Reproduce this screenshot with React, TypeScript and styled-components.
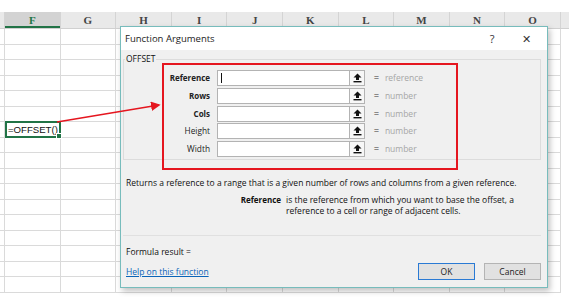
import React from 'react';
import styled, { createGlobalStyle } from 'styled-components';

const GlobalStyle = createGlobalStyle`
    html, body {
        margin: 0;
        padding: 0;
        background: #ffffff;
        overflow: hidden;
    }
`;

const COLS = ['F', 'G', 'H', 'I', 'J', 'K', 'L', 'M', 'N', 'O'];
const ROW_COUNT = 17;

const Screen = styled.div`
    position: relative;
    width: 569px;
    height: 297px;
    overflow: hidden;
    font-family: 'Open Sans', 'Noto Sans', sans-serif;
`;

const Sheet = styled.div`
    padding-top: 12px;
`;

const HeaderRow = styled.div`
    display: grid;
    grid-template-columns: 5px repeat(10, 55.6px);
    height: 16px;
    background: #e9e9e9;
    border-bottom: 1px solid #d0d0d0;
`;

const ColHead = styled.div<{ $active?: boolean }>`
    display: flex;
    align-items: center;
    justify-content: center;
    border-right: 1px solid #d4d4d4;
    font-family: 'Liberation Serif', serif;
    font-weight: bold;
    font-size: 11px;
    color: ${(p) => (p.$active ? '#217346' : '#444')};
    background: ${(p) => (p.$active ? '#d3d3d3' : 'transparent')};
    box-shadow: ${(p) => (p.$active ? 'inset 0 -2px 0 #217346' : 'none')};
`;

const Grid = styled.div`
    display: grid;
    grid-template-columns: 5px repeat(10, 55.6px);
    grid-auto-rows: 15.5px;
`;

const Cell = styled.div`
    border-right: 1px solid #dadada;
    border-bottom: 1px solid #dadada;
    box-sizing: border-box;
`;

const ActiveCell = styled.div`
    position: relative;
    box-sizing: border-box;
    border: 2px solid #217346;
    margin: -1px 0 0 0;
    height: 17px;
    font-family: 'Liberation Sans', sans-serif;
    font-size: 9.6px;
    line-height: 13px;
    padding-left: 1px;
    color: #111;
    white-space: nowrap;
    background: #fff;

    &::after {
        content: '';
        position: absolute;
        right: -3px;
        bottom: -3px;
        width: 4px;
        height: 4px;
        background: #217346;
        border: 1px solid #fff;
    }
`;

const Dialog = styled.div`
    position: absolute;
    left: 120px;
    top: 26px;
    width: 428px;
    height: 262px;
    box-sizing: border-box;
    border: 1px solid #77bcbc;
    background: #f0f0f0;
    box-shadow: 2px 3px 6px rgba(0, 0, 0, 0.25);
    display: flex;
    flex-direction: column;
`;

const TitleBar = styled.div`
    height: 22px;
    background: #ffffff;
    display: flex;
    align-items: center;
    padding: 0 4px 1px 4px;
    font-size: 9.5px;
    color: #222;
`;

const Title = styled.div`
    flex: 1;
`;

const TitleButton = styled.div`
    width: 34px;
    display: flex;
    justify-content: center;
    align-items: center;
    color: #333;
    font-size: 11px;
`;

const Body = styled.div`
    flex: 1;
    padding: 3px 6px 0 2px;
    display: flex;
    flex-direction: column;
    font-size: 8.5px;
    line-height: 12px;
    color: #111;
`;

const Group = styled.fieldset`
    margin: 0;
    padding: 5px 0 2px 0;
    border: 1px solid #dcdcdc;
    display: flex;
    flex-direction: column;
    gap: 1.75px;
`;

const Legend = styled.legend`
    padding: 0 1px;
    margin-left: 1px;
    font-size: 8.5px;
    line-height: 12px;
    color: #111;
`;

const ArgRow = styled.div`
    display: flex;
    align-items: center;
    height: 16px;
`;

const ArgLabel = styled.div<{ $required?: boolean }>`
    width: 86px;
    text-align: right;
    font-size: ${(p) => (p.$required ? '8px' : '8.3px')};
    font-weight: ${(p) => (p.$required ? 'bold' : 'normal')};
    color: #222;
`;

const Input = styled.div`
    margin-left: 7px;
    width: 132px;
    height: 16px;
    box-sizing: border-box;
    border: 1px solid #b3b3b3;
    border-right: none;
    background: #fff;
    position: relative;
`;

const Caret = styled.span`
    position: absolute;
    left: 3px;
    top: 2px;
    width: 1px;
    height: 10px;
    background: #111;
`;

const PickButton = styled.div`
    width: 16px;
    height: 16px;
    box-sizing: border-box;
    border: 1px solid #b3b3b3;
    background: #f7f7f7;
    display: flex;
    align-items: center;
    justify-content: center;
`;

const Equals = styled.div`
    margin-left: 9px;
    color: #888;
    font-weight: bold;
`;

const ArgValue = styled.div`
    margin-left: 6px;
    color: #a6a6a6;
`;

const Description = styled.div`
    margin: 17px 0 0 3px;
    white-space: nowrap;
`;

const ArgHelp = styled.div`
    display: grid;
    grid-template-columns: 158px 1fr;
    column-gap: 5px;
    margin-top: 5px;
    line-height: 11px;
`;

const ArgHelpName = styled.div`
    text-align: right;
    font-size: 8px;
    font-weight: bold;
`;

const Separator = styled.div`
    margin-top: 19px;
    height: 1px;
    background: #e0e0e0;
`;

const FormulaResult = styled.div`
    margin: 10px 0 0 3px;
`;

const Footer = styled.div`
    display: flex;
    align-items: center;
    margin-top: 5px;
    padding-left: 3px;
`;

const HelpLink = styled.a`
    flex: 1;
    color: #0a64b8;
    text-decoration: underline;
`;

const Button = styled.button<{ $primary?: boolean }>`
    width: 57px;
    height: 17px;
    margin-left: 9px;
    box-sizing: border-box;
    border: 1px solid ${(p) => (p.$primary ? '#2a7ad4' : '#b4b4b4')};
    background: #e1e1e1;
    font-family: 'Open Sans', 'Noto Sans', sans-serif;
    font-size: 8.5px;
    color: #222;
    padding: 0;
`;

const Overlay = styled.svg`
    position: absolute;
    left: 0;
    top: 0;
    pointer-events: none;
`;

const Highlight = styled.div`
    position: absolute;
    left: 162px;
    top: 63px;
    width: 296px;
    height: 107px;
    box-sizing: border-box;
    border: 2px solid #e5161f;
`;

const PickIcon = () => (
    <svg width="9" height="10" viewBox="0 0 9 10">
        <path d="M4.5 0.5 L8.5 4.5 L6 4.5 L6 7 L3 7 L3 4.5 L0.5 4.5 Z" fill="#111" />
        <rect x="0.5" y="8" width="8" height="1.4" fill="#111" />
    </svg>
);

const args = [
    { name: 'Reference', required: true, value: 'reference', caret: true },
    { name: 'Rows', required: true, value: 'number' },
    { name: 'Cols', required: true, value: 'number' },
    { name: 'Height', required: false, value: 'number' },
    { name: 'Width', required: false, value: 'number' }
];

export default function App() {
    const cells = [];
    for (let r = 0; r < ROW_COUNT; r++) {
        for (let c = 0; c < 11; c++) {
            if (r === 6 && c === 1) {
                cells.push(<ActiveCell key={`${r}-${c}`}>=OFFSET()</ActiveCell>);
            } else {
                cells.push(<Cell key={`${r}-${c}`} />);
            }
        }
    }

    return (
        <Screen>
            <GlobalStyle />
            <Sheet>
                <HeaderRow>
                    <ColHead />
                    {COLS.map((c) => (
                        <ColHead key={c} $active={c === 'F'}>
                            {c}
                        </ColHead>
                    ))}
                </HeaderRow>
                <Grid>{cells}</Grid>
            </Sheet>

            <Dialog>
                <TitleBar>
                    <Title>Function Arguments</Title>
                    <TitleButton>?</TitleButton>
                    <TitleButton>✕</TitleButton>
                </TitleBar>
                <Body>
                    <Group>
                        <Legend>OFFSET</Legend>
                        {args.map((a) => (
                            <ArgRow key={a.name}>
                                <ArgLabel $required={a.required}>{a.name}</ArgLabel>
                                <Input>{a.caret && <Caret />}</Input>
                                <PickButton>
                                    <PickIcon />
                                </PickButton>
                                <Equals>=</Equals>
                                <ArgValue>{a.value}</ArgValue>
                            </ArgRow>
                        ))}
                    </Group>
                    <Description>
                        Returns a reference to a range that is a given number of rows and columns from a given reference.
                    </Description>
                    <ArgHelp>
                        <ArgHelpName>Reference</ArgHelpName>
                        <div>
                            is the reference from which you want to base the offset, a
                            <br />
                            reference to a cell or range of adjacent cells.
                        </div>
                    </ArgHelp>
                    <Separator />
                    <FormulaResult>Formula result =</FormulaResult>
                    <Footer>
                        <HelpLink>Help on this function</HelpLink>
                        <Button $primary>OK</Button>
                        <Button>Cancel</Button>
                    </Footer>
                </Body>
            </Dialog>

            <Highlight />
            <Overlay width="569" height="297">
                <defs>
                    <marker id="head" markerWidth="6" markerHeight="6" refX="5" refY="3" orient="auto">
                        <path d="M0 0 L6 3 L0 6 Z" fill="#e5161f" />
                    </marker>
                </defs>
                <line x1="57" y1="122" x2="159" y2="105" stroke="#e5161f" strokeWidth="1.6" markerEnd="url(#head)" />
            </Overlay>
        </Screen>
    );
}
